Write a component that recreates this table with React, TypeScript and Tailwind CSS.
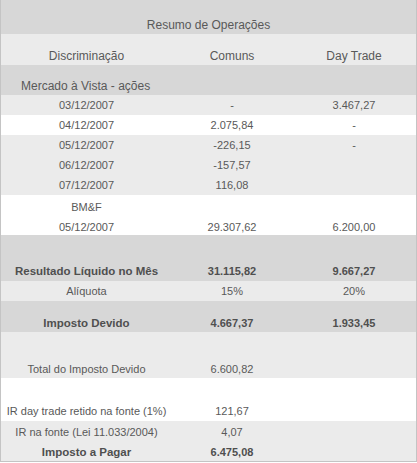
import type { ReactNode } from "react";

const DARK = "bg-[#d7d7d7]";
const LIGHT = "bg-[#ebebeb]";
const WHITE = "bg-white";

type RowProps = {
  bg: string;
  h: string;
  cells: ReactNode[];
  text?: string;
  pb?: string;
  bold?: boolean;
};

function Row({ bg, h, cells, text = "text-[11px]", pb = "pb-[3px]", bold }: RowProps) {
  return (
    <div className={`grid grid-cols-[171px_120px_124px] items-end ${bg} ${h} ${text} ${pb}`}>
      {cells.map((c, i) => (
        <div
          key={i}
          className={`text-center leading-[14px] ${bold ? (i === 0 ? "font-bold text-[11.5px] text-[#4f4f4f]" : "font-bold text-[#4f4f4f]") : ""}`}
        >
          {c}
        </div>
      ))}
    </div>
  );
}

export default function App() {
  return (
    <div className="w-[417px] bg-white font-['Liberation_Sans',Arial,sans-serif] text-[#595959]">
      <div className="border-x border-b border-[#c4c4c4]">
        {/* titulo */}
        <div className={`${DARK} h-[34px] flex items-end justify-center pb-[2px] text-[12px] leading-[14px]`}>
          Resumo de Operações
        </div>
        <Row bg={LIGHT} h="h-[31px]" text="text-[12px]" pb="pb-[2px]" cells={["Discriminação", "Comuns", "Day Trade"]} />
        <div className={`${DARK} h-[30px] flex items-end pl-5 pb-[2px] text-[12px] leading-[14px]`}>
          Mercado à Vista - ações
        </div>

        {/* operacoes */}
        <Row bg={LIGHT} h="h-[20px]" cells={["03/12/2007", "-", "3.467,27"]} />
        <Row bg={WHITE} h="h-[20px]" cells={["04/12/2007", "2.075,84", "-"]} />
        <Row bg={LIGHT} h="h-[20px]" cells={["05/12/2007", "-226,15", "-"]} />
        <Row bg={LIGHT} h="h-[20px]" cells={["06/12/2007", "-157,57", ""]} />
        <Row bg={LIGHT} h="h-[20px]" cells={["07/12/2007", "116,08", ""]} />
        <Row bg={WHITE} h="h-[20px]" pb="pb-[1px]" cells={["BM&F", "", ""]} />
        <Row bg={WHITE} h="h-[20px]" pb="pb-[1px]" cells={["05/12/2007", "29.307,62", "6.200,00"]} />

        {/* totais */}
        <Row bg={DARK} h="h-[46px]" pb="pb-[3px]" bold cells={["Resultado Líquido no Mês", "31.115,82", "9.667,27"]} />
        <Row bg={LIGHT} h="h-[20px]" cells={["Alíquota", "15%", "20%"]} />
        <Row bg={DARK} h="h-[31px]" pb="pb-[2px]" bold cells={["Imposto Devido", "4.667,37", "1.933,45"]} />
        <Row bg={LIGHT} h="h-[46px]" pb="pb-[2px]" cells={["Total do Imposto Devido", "6.600,82", ""]} />
        <Row bg={WHITE} h="h-[43px]" pb="pb-[3px]" cells={["IR day trade retido na fonte (1%)", "121,67", ""]} />
        <Row bg={LIGHT} h="h-[21px]" cells={["IR na fonte (Lei 11.033/2004)", "4,07", ""]} />
        <Row bg={LIGHT} h="h-[19px]" pb="pb-[2px]" bold cells={["Imposto a Pagar", "6.475,08", ""]} />
      </div>
    </div>
  );
}
